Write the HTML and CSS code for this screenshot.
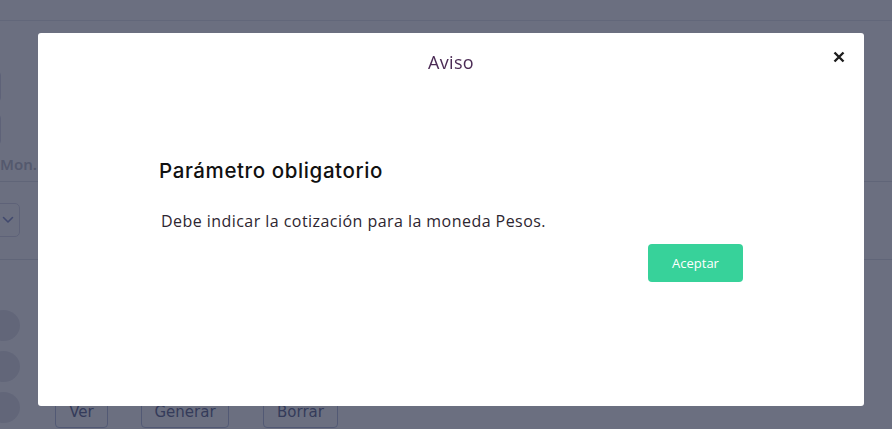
FILE: index.html
```html
<!DOCTYPE html>
<html lang="es">
<head>
<meta charset="utf-8">
<title>Aviso</title>
<link rel="stylesheet" href="styles.css">
</head>
<body>
<div class="page">
  <div class="topbar"></div>
  <div class="form">
    <div class="input-box first"></div>
    <div class="input-box second"></div>
    <div class="label">Mon.</div>
    <div class="rule"></div>
    <div class="select-box"><svg width="12" height="8" viewBox="0 0 12 8"><path d="M1.5 1.5 6 6l4.5-4.5" fill="none" stroke="#5a6ab8" stroke-width="1.6" stroke-linecap="round" stroke-linejoin="round"/></svg></div>
    <div class="rule second-rule"></div>
    <div class="circles">
      <span class="circle"></span>
      <span class="circle"></span>
      <span class="circle"></span>
    </div>
  </div>
  <div class="actions">
    <button class="btn-outline ver">Ver</button>
    <button class="btn-outline gen">Generar</button>
    <button class="btn-outline bor">Borrar</button>
  </div>
</div>

<div class="backdrop">
  <div class="modal">
    <div class="modal-header">
      <h2 class="modal-title">Aviso</h2>
      <span class="close" aria-label="Cerrar"><svg width="12" height="12" viewBox="0 0 12 12"><path d="M1.5 1.5l9 9M10.5 1.5l-9 9" stroke="#1e1e1e" stroke-width="2.4" stroke-linecap="butt"/></svg></span>
    </div>
    <div class="modal-body">
      <h3 class="msg-title">Parámetro obligatorio</h3>
      <p class="msg-text">Debe indicar la cotización para la moneda Pesos.</p>
      <div class="msg-actions">
        <button class="btn-accept">Aceptar</button>
      </div>
    </div>
  </div>
</div>
</body>
</html>
```

FILE: styles.css
```css
* { box-sizing: border-box; }
html, body { margin: 0; padding: 0; }
body {
  width: 892px;
  height: 429px;
  overflow: hidden;
  background: #ffffff;
  font-family: "Open Sans", "Noto Sans", sans-serif;
  position: relative;
}
.page { width: 892px; height: 429px; position: relative; overflow: hidden; }
.topbar {
  height: 21px;
  border-bottom: 1px solid #dcdde6;
}
.form {
  position: relative;
  height: 380px;
}
.input-box {
  width: 140px;
  height: 31px;
  margin-left: -139px;
  border: 1px solid #c9cbe0;
  border-radius: 4px;
}
.input-box.first { margin-top: 50px; }
.input-box.second { margin-top: 12px; }
.label {
  margin-left: 0;
  margin-top: 8px;
  width: 38px;
  white-space: nowrap;
  font-family: "Noto Sans", sans-serif;
  font-weight: 600;
  font-size: 15px;
  color: #a3a6b4;
  line-height: 22px;
}
.rule {
  height: 1px;
  background: #d3d5e0;
  margin-top: 6px;
}
.select-box {
  width: 60px;
  height: 34px;
  margin-left: -40px;
  margin-top: 21px;
  border: 1px solid #c9cbe0;
  border-radius: 5px;
  display: flex;
  align-items: center;
  padding-left: 41px;
}
.second-rule { margin-top: 22px; }
.circles {
  display: flex;
  flex-direction: column;
  gap: 10px;
  margin-top: 50px;
  margin-left: -13px;
}
.circle {
  width: 33px;
  height: 31px;
  border-radius: 50%;
  background: #dadbe4;
}
.actions {
  position: absolute;
  left: 55px;
  top: 396px;
  display: flex;
}
.btn-outline {
  height: 32px;
  background: transparent;
  border: 1px solid #9aa9cf;
  border-radius: 4px;
  font-family: "DejaVu Sans", sans-serif;
  font-size: 15px;
  color: #263068;
  padding: 0;
}
.ver { width: 53px; }
.gen { width: 88px; margin-left: 33px; }
.bor { width: 75px; margin-left: 34px; }

.backdrop {
  position: fixed;
  inset: 0;
  background: rgba(58, 63, 86, 0.75);
  padding: 33px 28px 23px 38px;
}
.modal {
  width: 826px;
  height: 373px;
  background: #ffffff;
  border-radius: 3px;
}
.modal-header {
  position: relative;
  height: 58px;
  display: flex;
  justify-content: center;
  align-items: center;
}
.modal-title {
  margin: 0;
  font-family: "Open Sans", sans-serif;
  font-weight: 400;
  font-size: 18px;
  color: #4b2b55;
  letter-spacing: 0.3px;
}
.close {
  position: absolute;
  right: 19px;
  top: 18px;
  width: 12px;
  height: 12px;
  display: flex;
}
.modal-body {
  padding: 67px 121px 0 121px;
}
.msg-title {
  margin: 0;
  font-family: "Inter", "Open Sans", sans-serif;
  font-weight: 500;
  font-size: 20.5px;
  line-height: 26px;
  color: #111111;
  letter-spacing: 0.6px;
}
.msg-text {
  margin: 27px 0 0 2px;
  font-family: "Open Sans", sans-serif;
  font-size: 16px;
  line-height: 20px;
  color: #2e2630;
  letter-spacing: 0.45px;
}
.msg-actions {
  display: flex;
  justify-content: flex-end;
  margin-top: 13px;
}
.btn-accept {
  width: 95px;
  height: 38px;
  border: none;
  border-radius: 4px;
  background: #37d29a;
  color: #ffffff;
  font-family: "Open Sans", sans-serif;
  font-size: 13px;
  padding: 0;
}
```
